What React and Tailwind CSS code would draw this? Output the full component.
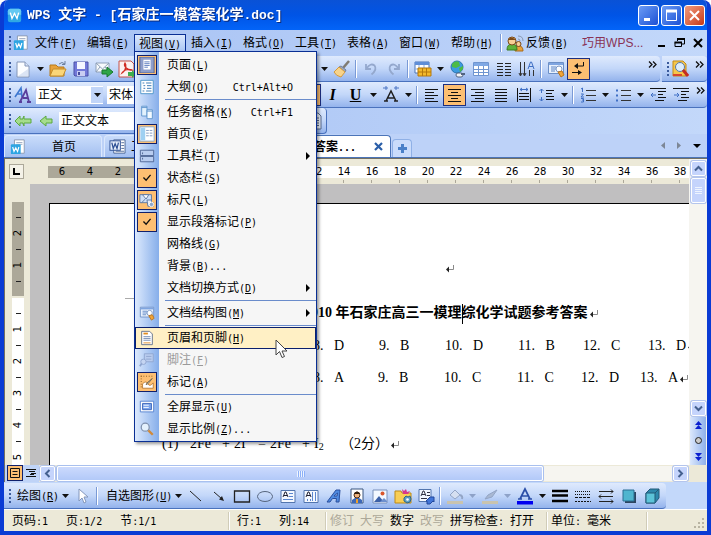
import React from "react";
import clsx from "clsx";

// Chinese text stays at 12px, ASCII runs are set in a 6px wide mono face. "&" marks the access key.
const Mix = ({ text, className }) => (
  <span className={clsx("whitespace-pre", className)}>
    {text.split(/([\x20-\x7e]+)/).map((part, i) =>
      i % 2 ? (
        <span key={i} className="font-['DejaVu_Sans_Mono',monospace] text-[10px]">
          {part.split(/&(.)/).map((c, j) => (j % 2 ? <u key={j}>{c}</u> : c))}
        </span>
      ) : (
        part
      )
    )}
  </span>
);

const Svg = ({ children, size = 18 }) => (
  <svg width={size} height={size} viewBox="0 0 18 18" fill="none" className="shrink-0" aria-hidden="true">
    {children}
  </svg>
);

const icons = {
  wps: (
    <>
      <rect x="1" y="1" width="16" height="16" rx="3" fill="#2fa8e4" />
      <path d="M1 4a3 3 0 0 1 3-3h10a3 3 0 0 1 3 3v4H1z" fill="#63c8f2" />
      <path d="M4 5.500l2 7 3-6 3 6 2-7" stroke="#fff" strokeWidth="1.600" />
    </>
  ),
  wpsDoc: (
    <>
      <path d="M5 1h11v15H5z" fill="#fff" stroke="#8a96ae" />
      <path d="M7 4h7M7 6h7" stroke="#9aa6bd" />
      <rect x="1" y="6" width="11" height="11" rx="1" fill="#2ea5e2" />
      <path d="M3 9l1.500 5L6.500 10l2 4L10 9" stroke="#fff" strokeWidth="1.300" />
    </>
  ),
  wordDoc: (
    <>
      <path d="M5 2h12v14H5z" fill="#fff" stroke="#4d6796" />
      <path d="M13 5h3M13 8h3M13 11h3M7 14h9" stroke="#4d6796" />
      <rect x="1" y="3" width="11" height="10" fill="#e6edfb" stroke="#2d4f94" />
      <path d="M3 5l1.500 6L6.500 6l2 5L10 5" stroke="#2d4f94" strokeWidth="1.300" />
    </>
  ),
  page: (
    <>
      <path d="M3 2h8l4 4v11H3z" fill="#fcfdff" stroke="#8496b8" />
      <path d="M11 2v4h4" fill="#dbe5f8" stroke="#8496b8" />
      <path d="M4 16h10V9z" fill="#dbe4f4" />
    </>
  ),
  open: (
    <>
      <path d="M1 5h6l2 2h6v9H1z" fill="#e8a23a" stroke="#b67b1c" />
      <path d="M4 9h13l-3 7H1z" fill="#fbd678" stroke="#c48d2b" />
      <path d="M10 4q3-3 6 0M16 1v3.500h-3" stroke="#6b7f9e" />
    </>
  ),
  save: (
    <>
      <path d="M2 2h14v14H3l-1-1z" fill="#7279d8" stroke="#4b51a6" />
      <path d="M5 2h8v7H5z" fill="#f4f6ff" />
      <path d="M5 11h8v5H5z" fill="#c9cdf2" />
      <path d="M6 12h2v3H6z" fill="#444a9c" />
    </>
  ),
  mail: (
    <>
      <path d="M1 3h13v9H1z" fill="#f7fafc" stroke="#8fa0b8" />
      <path d="M1 3l6.500 6L14 3M1 12l4-5M14 12l-4-5" stroke="#8fa0b8" />
      <path d="M7 10h5V7l6 5-6 5v-3H7z" fill="#2fa548" stroke="#16792d" />
    </>
  ),
  pdf: (
    <>
      <path d="M1 1h12l3 3v13H1z" fill="#fbf2f0" stroke="#c65249" />
      <path d="M4 13c5-3 4-9 3-10-2 3 3 8 7 7-5-2-9 1-10 3z" stroke="#d02c22" strokeWidth="1.300" />
      <path d="M10 12h4v-2l4 4-4 4v-2h-4z" fill="#3fae4d" />
    </>
  ),
  brush: (
    <>
      <path d="M16 1l-6 7" stroke="#7f7b72" strokeWidth="2.500" />
      <path d="M8 6l5 4-1 2-6-5z" fill="#9aa8c2" stroke="#76829b" />
      <path d="M6 7l6 5-4 5q-5-1-7-5z" fill="#f7d38a" stroke="#d39a3c" />
    </>
  ),
  undo: <path d="M4 4v5h5M4.500 8.500q4-6 8-3 3 4-3 9" stroke="#94a8cd" strokeWidth="1.800" />,
  redo: <path d="M14 4v5H9M13.500 8.500q-4-6-8-3-3 4 3 9" stroke="#94a8cd" strokeWidth="1.800" />,
  tableEdit: (
    <>
      <path d="M1 2h14v11H1z" fill="#fff" stroke="#4b74b8" />
      <path d="M1 2h14v3H1z" fill="#5f8ed8" />
      <path d="M5 5v8M10 5v8M1 9h14" stroke="#8aa9da" />
      <path d="M4 8h13v8H4z" fill="#f3b92b" stroke="#b5790d" />
      <path d="M4 12h13M8.500 8v8M12.500 8v8" stroke="#b5790d" />
    </>
  ),
  globe: (
    <>
      <circle cx="8" cy="7" r="6" fill="#3c9be0" stroke="#2a74b0" />
      <path d="M3 4q3-4 7-2l1 4-4 2-4-1zM10 8l4-2v3l-3 3z" fill="#4dbb46" />
      <path d="M7 15q0-2 2-2h3q2 0 2 2t-2 2H9q-2 0-2-2z" fill="#f3f5f8" stroke="#536480" />
      <path d="M12 14h4" stroke="#536480" strokeWidth="2" />
    </>
  ),
  grid: (
    <>
      <path d="M1.500 2.500h15v13h-15z" fill="#fff" stroke="#6f95d0" />
      <path d="M2 3h14v3H2z" fill="#7fa8e4" />
      <path d="M2 9.500h14M2 12.500h14M6.500 6v9M11.500 6v9" stroke="#6f95d0" />
    </>
  ),
  columns: <path d="M2 3.500h6M2 6.500h6M2 9.500h6M2 12.500h6M2 15.500h6M10 3.500h6M10 6.500h6M10 9.500h6M10 12.500h6M10 15.500h6" stroke="#222" />,
  textDir: (
    <>
      <path d="M2.500 2v13M6.500 2v13M11.500 10v6M15.500 10v6" stroke="#333" />
      <path d="M1 13l1.500 3L4 13M5 13l1.500 3L8 13" stroke="#333" />
      <path d="M10 9l2.500-7h1L16 9M11 6.500h4" stroke="#3f6fc4" />
    </>
  ),
  docMap: (
    <>
      <path d="M1.500 2.500h15v11h-15z" fill="#e9f1fd" stroke="#6c8fc6" />
      <path d="M2 3h14v2H2z" fill="#7fa5e0" />
      <path d="M4 7h5M4 9h5M4 11h4" stroke="#5e86c4" />
      <circle cx="12" cy="9" r="3" fill="#fff" stroke="#7b98c6" />
      <path d="M11 12l4-1 2 4-3 2z" fill="#f0a53a" stroke="#bb731a" />
    </>
  ),
  marks: (
    <>
      <path d="M13.500 2v4H6M2 12.500h8" stroke="#111" />
      <path d="M8 3L4 6l4 3zM8 10l4 2.500L8 15z" fill="#111" />
    </>
  ),
  find: (
    <>
      <path d="M2 1h10l3 3v12H2z" fill="#f6c64a" stroke="#c28b18" />
      <circle cx="9" cy="7" r="4.500" fill="#dcecfb" stroke="#5778a8" />
      <path d="M12 10l5 6" stroke="#c42d22" strokeWidth="3" />
      <path d="M2 15h9" stroke="#d8462e" strokeWidth="2" />
    </>
  ),
  people: (
    <>
      <path d="M9 17q0-5 4-5t4 5z" fill="#e9a13c" stroke="#a96a18" />
      <circle cx="12.500" cy="10" r="2.500" fill="#f8cf96" stroke="#7c4a19" />
      <path d="M1 16q0-6 5-6t5 6z" fill="#5fb33b" stroke="#3b7d20" />
      <circle cx="6" cy="7" r="4" fill="#f8cf96" stroke="#7c4a19" />
      <path d="M2 6q3-5 8 0z" fill="#7c4a19" />
      <path d="M12 5q2 0 2 2M12 2q5 0 5 5" stroke="#8696b0" />
    </>
  ),
  styleA: (
    <>
      <path d="M1 11L7 2l1 9M3 8h5" stroke="#3e78cf" strokeWidth="1.600" />
      <path d="M6 16l6-12 3 12M9 12h5M5 16h3M13 16h4" stroke="#5a3f9c" strokeWidth="1.800" />
    </>
  ),
  charA: (
    <>
      <path d="M4 15L9 5l5 10M6 12h6M2 15h4M12 15h4" stroke="#222" strokeWidth="1.500" />
      <path d="M1 2h5M12 2h5M4 0v4M14 0v4" stroke="#4a74c4" />
    </>
  ),
  left: <path d="M2 3.500h13M2 6.500h9M2 9.500h13M2 12.500h9M2 15.500h13" stroke="#111" />,
  center: <path d="M2 3.500h13M5 6.500h7M2 9.500h13M5 12.500h7M2 15.500h13" stroke="#111" />,
  right: <path d="M2 3.500h13M6 6.500h9M2 9.500h13M6 12.500h9M2 15.500h13" stroke="#111" />,
  justify: <path d="M3 3.500h12M3 6.500h12M3 9.500h12M3 12.500h12M3 15.500h12" stroke="#111" />,
  distribute: (
    <>
      <path d="M2.500 2v14M15.500 2v14M4 7.500h10M4 10.500h10M4 13.500h10" stroke="#111" />
      <path d="M5 3.500h8M7 2L5 3.500 7 5M11 2l2 1.500L11 5" stroke="#3f6fc4" />
    </>
  ),
  spacing: (
    <>
      <path d="M8 4.500h8M8 7.500h6M8 10.500h8M8 13.500h8" stroke="#111" />
      <path d="M3.500 3v4M3.500 11v4M1.500 5l2-2 2 2M1.500 13l2 2 2-2" stroke="#3f6fc4" />
    </>
  ),
  numbers: (
    <>
      <path d="M7 4.500h10M7 9.500h10M7 14.500h10" stroke="#333" />
      <path d="M3.500 2v4M2 3l1.500-1M2 8h2.500L2 11h3M2 12.500h2.500v3.500H2M3 14h1.500" stroke="#3f6fc4" />
    </>
  ),
  bullets: (
    <>
      <path d="M7 4.500h10M7 9.500h10M7 14.500h10" stroke="#333" />
      <path d="M2 3.500h2v2H2zM2 8.500h2v2H2zM2 13.500h2v2H2z" fill="#3f6fc4" />
    </>
  ),
  outdent: (
    <>
      <path d="M1 2.500h16M9 5.500h8M9 8.500h5M9 11.500h8M6 14.500h9" stroke="#111" />
      <path d="M7 9H2M4 7L2 9l2 2" stroke="#3f6fc4" />
    </>
  ),
  indent: (
    <>
      <path d="M1 2.500h16M9 5.500h8M9 8.500h5M9 11.500h8M6 14.500h9" stroke="#111" />
      <path d="M2 9h5M5 7l2 2-2 2" stroke="#3f6fc4" />
    </>
  ),
  back2: (
    <path d="M1 9l5-5v3h3l0-1 1-2v3h7v4h-7v3l-1-2v-1H6v3z" fill="#a5dd8c" stroke="#5aa83f" />
  ),
  back1: <path d="M3 9l6-5v3h6v4H9v3z" fill="#a5dd8c" stroke="#5aa83f" />,
  docLines: (
    <>
      <path d="M3 1h9l3 3v13H3z" fill="#e9f1fd" stroke="#56688c" />
      <path d="M5 6h8M5 8.500h8M5 11h8M5 13.500h8" stroke="#56688c" />
    </>
  ),
  // view menu
  viewPage: (
    <>
      <path d="M1 0h16v18H1z" fill="#8e9ecb" stroke="#4f5c8a" />
      <path d="M5 3h8v11H5z" fill="#fff" />
      <path d="M6 5.500h6M6 7.500h6M6 9.500h6M6 11.500h4" stroke="#5577bb" />
    </>
  ),
  outline: (
    <>
      <path d="M2 1.500h14v15H2z" fill="#fff" stroke="#4790c8" />
      <path d="M4 4.500h2M8 4.500h6M5 7.500h2M9 7.500h5M5 10.500h2M9 10.500h5M4 13.500h2M8 13.500h6" stroke="#2a6fae" />
    </>
  ),
  pane: (
    <>
      <path d="M3 2.500h6v11H3z" fill="#e2f2fd" stroke="#5b93cc" />
      <path d="M9 6.500h6v10H9z" fill="#f3faff" stroke="#5b93cc" />
      <path d="M3 4h6M9 8h6" stroke="#5b93cc" />
    </>
  ),
  home: (
    <>
      <path d="M1 1h16v16H1z" fill="#fff" stroke="#7fa9d8" />
      <path d="M2 2h5v14H2z" fill="#9fd0f2" />
      <path d="M8 5h3M12 5h3M8 8h3M12 8h3M8 11h3M12 11h3" stroke="#7b95bd" />
    </>
  ),
  bars: (
    <>
      <path d="M1.500 2.500h15v6h-15zM1.500 9.500h15v6h-15z" fill="#b9cdf0" stroke="#48608f" />
      <path d="M4 5v2M4 11v2" stroke="#48608f" />
    </>
  ),
  check: <path d="M5 8.500l3 3 5-6" stroke="#111" strokeWidth="1.500" />,
  ruler: (
    <>
      <path d="M1 3h13v9H1z" fill="#cfdff5" stroke="#58739f" />
      <path d="M4 3l4 5 3-5zM3 12l4-4" fill="#fff" stroke="#58739f" />
      <path d="M9 9h5v3h2v4h-6z" fill="#e9eef6" stroke="#58739f" />
      <circle cx="14" cy="14" r="2.500" fill="#8fa6c9" stroke="#fff" />
    </>
  ),
  headerFooter: (
    <>
      <path d="M3 1.500h9l3 3v12H3z" fill="#fff" stroke="#5d6b85" />
      <path d="M5 4h5" stroke="#e08b1d" strokeWidth="2" />
      <path d="M5 7.500h8M5 9.500h8M5 11.500h8" stroke="#6d86b0" />
      <path d="M5 14.500h8" stroke="#e08b1d" />
    </>
  ),
  footnote: (
    <>
      <path d="M6 2h10v9H6z" fill="#b8cbee" stroke="#8fa5cf" />
      <path d="M8 5h6M8 8h6" stroke="#8fa5cf" />
      <circle cx="5" cy="11" r="3" fill="#c5d5f2" stroke="#8fa5cf" />
      <path d="M3 13l-2 3" stroke="#8fa5cf" strokeWidth="2" />
    </>
  ),
  markup: (
    <>
      <path d="M2 2.500h14M2.500 2v13" stroke="#7a4d18" strokeDasharray="1 2" />
      <path d="M4 11q4-4 6 0t6-1v6H4z" fill="#fff" stroke="#b97b35" />
      <path d="M15 5l-5 6-2 1 1-2z" fill="#e4e0d4" stroke="#72634a" />
    </>
  ),
  screen: (
    <>
      <path d="M1.500 2.500h15v12h-15z" fill="#fff" stroke="#4f7dcf" />
      <path d="M4 5h10v7H4z" fill="#7ba5ec" stroke="#3662b8" />
      <path d="M5 7h6M5 9.500h6" stroke="#fff" />
    </>
  ),
  zoom: (
    <>
      <circle cx="7" cy="7" r="4.500" fill="#e4f1fd" stroke="#7f91ae" strokeWidth="1.400" />
      <path d="M10.500 10.500l5 5" stroke="#d08a3b" strokeWidth="2.600" />
    </>
  ),
  // drawing bar
  pointer: <path d="M5 2v12l3-3 2 5 2-1-2-5h4z" fill="#fff" stroke="#8396bb" />,
  line: <path d="M3 4l11 10" stroke="#222" />,
  arrow: (
    <>
      <path d="M4 5l8 7" stroke="#222" />
      <path d="M14 14l-5-1.500 3-3.500z" fill="#222" />
    </>
  ),
  rect: <path d="M1.500 4h15v11h-15z" stroke="#222" strokeWidth="1.300" />,
  ellipse: <ellipse cx="9" cy="9.500" rx="7.500" ry="5" stroke="#56657e" />,
  textBox: (
    <>
      <path d="M2 3.500h14v12H2z" fill="#f4f8ff" stroke="#5275ae" />
      <path d="M4 10l2-5h1l2 5M5 8.500h3" stroke="#223" />
      <path d="M10 6.500h4M10 9.500h4M4 12.500h10" stroke="#5a86d0" />
    </>
  ),
  vTextBox: (
    <>
      <path d="M2 3.500h14v12H2z" fill="#f4f8ff" stroke="#5275ae" />
      <path d="M4 10l2-5h1l2 5M5 8.500h3" stroke="#223" />
      <path d="M10.500 5v9M13.500 5v9M5.500 12v2M8.500 12v2" stroke="#5a86d0" />
    </>
  ),
  wordArt: (
    <>
      <path d="M2 15L11 3h4l-1 12h-3l.5-3.500H7.500L5 15zM9 9h3l.5-3z" fill="#4f8ae0" stroke="#2a4f9e" />
    </>
  ),
  clipArt: (
    <>
      <path d="M3 2h12v14H3z" fill="#fff" stroke="#38547f" />
      <path d="M4 13q5-5 10 0v3H4z" fill="#3d68b8" />
      <circle cx="9" cy="8" r="3" fill="#f0b37d" stroke="#4b2b12" />
      <path d="M6 7q3-5 6 0z" fill="#33200f" />
      <path d="M8 12h2v4H8z" fill="#f0a028" />
    </>
  ),
  picture: (
    <>
      <path d="M2 3h14v13H2z" fill="#f3f8ff" stroke="#7b91bb" />
      <path d="M3 15l5-6 5 6z" fill="#3b60a8" />
      <path d="M9 15l4-4 3 3v1z" fill="#6d90cf" />
      <circle cx="11.500" cy="6.500" r="2" fill="#d9562b" />
    </>
  ),
  gallery: (
    <>
      <path d="M1 4h6l1 2h9v10H1z" fill="#f8ce56" stroke="#bd8a16" />
      <path d="M8 2l2 2 2-2 1 3 3-1-2 3H9z" fill="#d8388a" />
      <path d="M12 9l2 1 2-1 1 3-1 3-3 1-3-2v-3z" fill="#5fa0c4" stroke="#2c6688" />
      <circle cx="13.500" cy="12.500" r="1.300" fill="#fff" />
    </>
  ),
  abcBox: (
    <>
      <path d="M2 2.500h12v12H2z" fill="#f4f8ff" stroke="#5275ae" />
      <path d="M4 9l2-5h1l2 5M5 7.500h3M10 5.500h3M10 8.500h3M4 11.500h6" stroke="#334" />
      <path d="M10 17v-3h-1l4-4h4v5l-1-1-3 3z" fill="#4175d8" stroke="#23489c" />
    </>
  ),
  fill: (
    <>
      <path d="M4 8l5-5 5 5-5 4z" fill="#d5dff1" stroke="#93a5c6" />
      <path d="M14 8q3 1 2 4" stroke="#93a5c6" strokeWidth="2" />
      <path d="M1 14h16v3H1z" fill="#c9c3ae" />
    </>
  ),
  lineColor: (
    <>
      <path d="M16 3l-5 7-7 2 3-4z" fill="#a9b8d2" stroke="#93a5c6" />
      <path d="M1 14h16v3H1z" fill="#c9c3ae" />
    </>
  ),
  fontColor: (
    <>
      <path d="M4 12L9 2l5 10M6 9h6M2 12h4M12 12h4" stroke="#2b4fa8" strokeWidth="1.700" />
      <path d="M1 14h16v3.500H1z" fill="#0000f0" />
    </>
  ),
  weights: <path d="M1 4h16M1 8.500h16M1 14h16" stroke="#000" strokeWidth="2.500" />,
  dashes: (
    <>
      <path d="M1 4.500h16M1 7.500h16" stroke="#111" strokeDasharray="1 1" />
      <path d="M1 10.500h16" stroke="#111" strokeDasharray="3 1" />
      <path d="M1 14.500h16" stroke="#111" strokeDasharray="2 1" />
    </>
  ),
  arrows: <path d="M2 4.500h14M14 2.500l2 2-2 2M2 9.500h14M4 7.500l-2 2 2 2M2 14.500h14M14 12.500l2 2-2 2" stroke="#222" />,
  shadow: (
    <>
      <path d="M5 5h11v11H5z" fill="#2d4560" />
      <path d="M3 3h11v11H3z" fill="#4fb5cf" stroke="#2b6f93" />
    </>
  ),
  cube: (
    <>
      <path d="M3 6l4-4h9v9l-4 5H3z" fill="#2d87ab" stroke="#225a78" />
      <path d="M3 6h9v10H3z" fill="#5cc3d8" stroke="#225a78" />
      <path d="M12 6l4-4" stroke="#225a78" />
    </>
  ),
};

const Tool = ({ name, label, on }) => (
  <button
    aria-label={label}
    className={clsx(
      "flex h-[22px] w-[23px] shrink-0 items-center justify-center",
      on && "border border-[#1c2f80] bg-[#fdbf72]"
    )}
  >
    <Svg>{icons[name]}</Svg>
  </button>
);

const Drop = ({ dim }) => (
  <button aria-label="更多选项" className="flex h-[22px] w-3 shrink-0 items-center justify-center">
    <svg width="7" height="4" aria-hidden="true">
      <path d="M0 0h7L3.500 4z" fill={dim ? "#8ea2c8" : "#111"} />
    </svg>
  </button>
);

const Sep = () => <div className="mx-[2px] h-[18px] w-[2px] shrink-0 border-l border-[#7a9ad6] bg-white" />;

const Grip = () => (
  <div className="ml-[5px] flex shrink-0 flex-col gap-[2px]">
    {[0, 1, 2, 3].map((i) => (
      <span key={i} className="h-[2px] w-[2px] bg-[#3a5a9c]" />
    ))}
  </div>
);

const More = () => (
  <button aria-label="工具栏选项" className="mb-2 flex h-4 w-4 shrink-0 items-center justify-center">
    <svg width="9" height="7" fill="none" stroke="#111" strokeWidth="1.300" aria-hidden="true">
      <path d="M1 0.500l3 3-3 3M5 0.500l3 3-3 3" />
    </svg>
  </button>
);

const Bar = ({ className, children }) => (
  <div
    className={clsx(
      "flex h-[26px] items-center overflow-hidden rounded-r-sm border-b border-[#4a72bd] bg-gradient-to-b from-[#dfeafd] via-[#c3d7f9] to-[#94b3ec]",
      className
    )}
  >
    {children}
  </div>
);

const Combo = ({ label, value, className }) => (
  <div className={clsx("flex h-[18px] shrink-0 items-center bg-white", className)}>
    <select aria-label={label} className="h-full min-w-0 flex-1 appearance-none bg-white pl-[2px] text-xs">
      <option>{value}</option>
    </select>
    <span className="flex h-4 w-3 items-center justify-center bg-[#c1d5f8]">
      <svg width="7" height="4" aria-hidden="true">
        <path d="M0 0h7L3.500 4z" fill="#111" />
      </svg>
    </span>
  </div>
);

const viewMenu = [
  { text: "页面(&L)", icon: "viewPage", on: true },
  { text: "大纲(&O)", icon: "outline", keys: "Ctrl+Alt+O" },
  null,
  { text: "任务窗格(&K)", icon: "pane", keys: "Ctrl+F1" },
  { text: "首页(&E)", icon: "home", on: true },
  { text: "工具栏(&T)", icon: "bars", sub: true },
  { text: "状态栏(&S)", icon: "check", on: true },
  { text: "标尺(&L)", icon: "ruler", on: true },
  { text: "显示段落标记(&P)", icon: "check", on: true },
  { text: "网格线(&G)" },
  { text: "背景(&B)..." },
  { text: "文档切换方式(&D)", sub: true },
  null,
  { text: "文档结构图(&M)", icon: "docMap", sub: true },
  null,
  { text: "页眉和页脚(&H)", icon: "headerFooter", active: true },
  { text: "脚注(&F)", icon: "footnote", disabled: true },
  { text: "标记(&A)", icon: "markup", on: true },
  null,
  { text: "全屏显示(&U)", icon: "screen" },
  { text: "显示比例(&Z)...", icon: "zoom" },
];

const ViewMenu = () => (
  <div className="absolute left-0 top-[17px] z-20 w-[183px] border border-[#0a2f94] bg-[#f6f6f6] bg-[linear-gradient(to_right,#dce9fd_0,#86aeea_24px,#f6f6f6_24px)] pb-px pt-[2px] shadow-[2px_2px_3px_rgba(0,0,0,0.4)]">
    {viewMenu.map((item, i) =>
      item ? (
        <button
          key={i}
          disabled={item.disabled}
          className={clsx(
            "flex h-[22px] w-full items-center border pl-px text-left",
            item.active ? "border-[#0a1f6c] bg-[#fff0c5]" : "border-transparent",
            item.disabled && "text-[#9a9a9a]"
          )}
        >
          <span
            className={clsx(
              "flex h-5 w-5 shrink-0 items-center justify-center",
              item.on && "border border-[#10206c] bg-[#fdbf72]"
            )}
          >
            {item.icon && <Svg size={16}>{icons[item.icon]}</Svg>}
          </span>
          <Mix text={item.text} className="ml-[10px] flex-1" />
          {item.keys && <Mix text={item.keys} className="mr-[22px]" />}
          {item.sub && (
            <svg width="4" height="8" className="mr-[5px]" aria-hidden="true">
              <path d="M0 0l4 4-4 4z" fill="#000" />
            </svg>
          )}
        </button>
      ) : (
        <div key={i} className="ml-[30px] flex h-[3px] items-center">
          <div className="h-px w-full bg-[#6a8ccb]" />
        </div>
      )
    )}
    {/* mouse pointer over the highlighted item */}
    <svg width="13" height="20" viewBox="0 0 13 20" className="absolute left-[140px] top-[287px]" aria-hidden="true">
      <path d="M1 1v15l3.500-3.500L7 18.500l2.500-1L7 12h5z" fill="#fff" stroke="#444" />
    </svg>
  </div>
);

const menusBefore = ["文件(&F)", "编辑(&E)"];
const menusAfter = ["插入(&I)", "格式(&O)", "工具(&T)", "表格(&A)", "窗口(&W)", "帮助(&H)"];

const MenuButton = ({ text }) => (
  <button className="h-[18px] w-[52px] shrink-0">
    <Mix text={text} />
  </button>
);

const TitleButton = ({ label, close, children }) => (
  <button
    aria-label={label}
    className={clsx(
      "flex h-[21px] w-[21px] items-center justify-center rounded-[3px] border border-white",
      close ? "bg-gradient-to-br from-[#f09a7c] to-[#c8350f]" : "bg-gradient-to-br from-[#6c9bf5] to-[#1c4fd4]"
    )}
  >
    <svg width="15" height="15" fill="none" stroke="#fff" aria-hidden="true">
      {children}
    </svg>
  </button>
);

const Return = () => (
  <svg width="9" height="9" className="ml-px inline-block" fill="none" aria-hidden="true">
    <path d="M8.500 1v4.500H4" stroke="#8a8a8a" />
    <path d="M1 5.500l3-3v6z" fill="#222" />
  </svg>
);

const ScrollButton = ({ label, d }) => (
  <button
    aria-label={label}
    className="flex h-[15px] w-[15px] shrink-0 items-center justify-center rounded-[2px] border border-white bg-[#c5d4fc] shadow-[0_0_0_1px_#b4c5ec]"
  >
    <svg width="9" height="9" fill="none" stroke="#44608f" strokeWidth="2" aria-hidden="true">
      <path d={d} />
    </svg>
  </button>
);

const rulerMarks = ["14", "16", "18", "20", "22", "24", "26", "28", "30", "32", "34", "36", "38"];

const answers = [
  [
    { n: "8", v: "D", w: "w-[66px]" },
    { n: "9", v: "B", w: "w-[66px]" },
    { n: "10", v: "D", w: "w-[73px]" },
    { n: "11", v: "B", w: "w-[65px]" },
    { n: "12", v: "C", w: "w-[65px]" },
    { n: "13", v: "D", w: "w-16" },
  ],
  [
    { n: "8", v: "A", w: "w-[65px]" },
    { n: "9", v: "B", w: "w-[66px]" },
    { n: "10", v: "C", w: "w-[73px]" },
    { n: "11", v: "C", w: "w-16" },
    { n: "12", v: "D", w: "w-[59px]" },
    { n: "13", v: "A", w: "w-16" },
  ],
];

const VTick = () => (
  <span className="flex h-4 shrink-0 items-center">
    <i className="h-px w-[5px] bg-[#222]" />
  </span>
);

const VNum = ({ n }) => (
  <span className="flex h-4 shrink-0 items-center">
    <span className="-rotate-90 text-[10px] leading-none">{n}</span>
  </span>
);

const Editor = () => (
  <div className="flex min-h-0 flex-1 border-l border-t border-[#716f64] bg-[#ece9d8]">
    {/* vertical ruler */}
    <div className="flex w-[25px] shrink-0 flex-col overflow-hidden pl-1 font-['DejaVu_Sans',sans-serif]">
      <button
        aria-label="制表符"
        className="mt-[5px] flex h-[15px] w-[15px] shrink-0 items-center justify-center border border-[#aca899] bg-[#f4f2e8]"
      >
        <svg width="7" height="7" aria-hidden="true">
          <path d="M1 0v6h6" fill="none" stroke="#000" strokeWidth="2" />
        </svg>
      </button>
      <div className="ml-[3px] mt-[23px] flex h-[94px] w-3 shrink-0 flex-col items-center justify-center bg-[#aca899]">
        <VTick />
        <VNum n="2" />
        <VTick />
        <VNum n="1" />
        <VTick />
      </div>
      <div className="ml-[3px] mt-[2px] flex min-h-0 w-3 flex-1 flex-col items-center overflow-hidden bg-white pt-[7px]">
        {["1", "2", "3", "4", "5"].map((n) => (
          <React.Fragment key={n}>
            <VTick />
            <VNum n={n} />
          </React.Fragment>
        ))}
      </div>
    </div>

    <div className="flex min-w-0 flex-1 flex-col">
      {/* horizontal ruler */}
      <div className="h-[25px] shrink-0 overflow-hidden pl-[18px] pt-[7px] font-['DejaVu_Sans',sans-serif] text-[10px] leading-3">
        <div className="flex h-3 bg-white text-center">
          <div className="flex w-[100px] shrink-0 bg-[#aca899]">
            <span className="w-7">6</span>
            <span className="w-7">4</span>
            <span className="w-7">2</span>
          </div>
          <div className="w-[154px] shrink-0" />
          <span className="w-7 shrink-0">12</span>
          {rulerMarks.map((n) => (
            <span key={n} className="w-7 shrink-0">
              {n}
            </span>
          ))}
        </div>
        <div className="ml-[281px] mt-[2px] flex">
          {rulerMarks.map((n) => (
            <span key={n} className="flex w-7 shrink-0 justify-center">
              <i className="h-[3px] w-px bg-[#aca899]" />
            </span>
          ))}
        </div>
      </div>

      <div className="flex min-h-0 flex-1 flex-col bg-[#c0bfc0] pl-[19px] pt-[19px]">
        <div className="min-h-0 flex-1 overflow-hidden whitespace-nowrap border-l border-t border-black bg-white font-['Liberation_Serif','Noto_Sans_CJK_SC',serif] text-sm leading-5">
          <div className="h-[94px] pl-[394px] pt-[54px]">
            <Return />
          </div>
          <div className="ml-[75px] h-[5px] w-3 border-t border-[#aaa]" />
          <h1 className="pl-[254px] font-bold">
            2010 年石家庄高三一模理
            <span className="-mr-px inline-block h-5 w-px bg-black align-middle" />
            综化学试题参考答案
            <Return />
          </h1>
          <div className="pt-[6px]">
            {answers.map((row, i) => (
              <p key={i} className="flex h-8 items-center overflow-hidden pl-[263px]">
                {row.map((a) => (
                  <span key={a.n} className={clsx("shrink-0", a.w)}>
                    {a.n}
                    <span className="inline-block w-[14px]">.</span>
                    {a.v}
                    {a.n === "13" && <Return />}
                  </span>
                ))}
              </p>
            ))}
          </div>
          <p className="mt-10 flex h-5 pl-28">
            <span className="w-7">(1)</span>
            <span className="w-8">2Fe</span>
            <span className="w-3">+</span>
            <span className="w-6">2I</span>
            <span className="w-3">=</span>
            <span className="w-8">2Fe</span>
            <span className="w-3">+</span>
            <span className="w-[26px]">
              I<sub className="text-[10px]">2</sub>
            </span>
            <span>
              （2分）
              <Return />
            </span>
          </p>
          <p className="mt-2 h-5 pl-[217px]">CO2 CO2ET</p>
        </div>
      </div>
    </div>

    {/* vertical scroll bar */}
    <div className="flex w-[18px] shrink-0 flex-col items-center bg-[#f6f5f0]">
      <div className="pt-[2px]">
        <ScrollButton label="向上滚动" d="M1 6.500l3.500-3.500L8 6.500" />
      </div>
      <div className="mt-[2px] flex h-[25px] w-[15px] flex-col items-center justify-center gap-px rounded-[2px] border border-white bg-[#c5d4fc] shadow-[0_0_0_1px_#b4c5ec]">
        {[0, 1, 2, 3].map((i) => (
          <span key={i} className="h-px w-[7px] bg-[#eef4fe]" />
        ))}
      </div>
      <div className="flex-1" />
      <ScrollButton label="向下滚动" d="M1 2.500L4.500 6 8 2.500" />
      <div className="mt-px flex h-12 w-4 flex-col items-center justify-around bg-gradient-to-r from-[#dce8fc] to-[#8fb0ea]">
        <button aria-label="前一页">
          <svg width="7" height="8" fill="#0a1fd0" className="block" aria-hidden="true">
            <path d="M0 4l3.500-4L7 4zM0 8l3.500-4L7 8z" />
          </svg>
        </button>
        <button aria-label="选择浏览对象" className="h-[7px] w-[7px] rounded-full border border-[#222] bg-[#ccc]" />
        <button aria-label="下一页">
          <svg width="7" height="8" fill="#0a1fd0" className="block" aria-hidden="true">
            <path d="M0 0h7L3.500 4zM0 4h7L3.500 8z" />
          </svg>
        </button>
      </div>
    </div>
  </div>
);

const Divider = () => <div className="h-[18px] w-[2px] shrink-0 border-l border-[#d0ccb8] bg-white" />;

const App = () => (
  <div className="flex h-screen flex-col overflow-hidden rounded-t-lg border-x-4 border-b-4 border-[#0a3bd4] bg-[#bdd2f8] font-['Liberation_Sans','Noto_Sans_CJK_SC',sans-serif] text-xs text-black">
    {/* title bar */}
    <header className="-mx-1 flex h-[30px] shrink-0 items-center bg-gradient-to-b from-[#0a52d6] via-[#0054e6] to-[#0364f8] pl-[7px] pr-[6px] text-white">
      <Svg size={15}>{icons.wps}</Svg>
      <h1 className="ml-[5px] flex-1 whitespace-pre text-sm font-bold drop-shadow-[1px_1px_0_#0a2c80]">
        <span className="font-['Liberation_Mono',monospace] text-[13px]">WPS </span>文字
        <span className="font-['Liberation_Mono',monospace] text-[13px]"> - [</span>石家庄一模答案化学
        <span className="font-['Liberation_Mono',monospace] text-[13px]">.doc]</span>
      </h1>
      <div className="flex gap-[2px]">
        <TitleButton label="最小化">
          <path d="M3 11.500h6" strokeWidth="3" />
        </TitleButton>
        <TitleButton label="最大化">
          <path d="M2.500 3.500h10v9h-10z" />
          <path d="M2 3h11" strokeWidth="3" />
        </TitleButton>
        <TitleButton label="关闭" close>
          <path d="M3 3l9 9M12 3l-9 9" strokeWidth="2" />
        </TitleButton>
      </div>
    </header>

    {/* menu bar */}
    <nav className="flex h-[26px] shrink-0 items-center bg-gradient-to-r from-[#a5c0f3] to-[#c3d8fa]">
      <Grip />
      <div className="flex w-[19px] shrink-0 pl-[2px]">
        <Svg size={16}>{icons.wpsDoc}</Svg>
      </div>
      {menusBefore.map((m) => (
        <MenuButton key={m} text={m} />
      ))}
      <div className="relative shrink-0">
        <button className="block h-[18px] w-[52px] border border-b-0 border-[#0a2f94] bg-gradient-to-b from-[#dbe8fd] to-[#a9c4f2]">
          <Mix text="视图(&V)" />
        </button>
        <ViewMenu />
      </div>
      {menusAfter.map((m) => (
        <MenuButton key={m} text={m} />
      ))}
      <Sep />
      <button className="ml-[2px] flex shrink-0 items-center gap-[2px]">
        <Svg>{icons.people}</Svg>
        <Mix text="反馈(&B)" />
      </button>
      <a href="#tips" className="ml-[14px] shrink-0 whitespace-nowrap text-[#8a3355]">
        巧用WPS...
      </a>
      <div className="ml-auto flex shrink-0 items-center gap-2 pr-1">
        <button aria-label="最小化文档">
          <svg width="10" height="12" className="block" aria-hidden="true">
            <path d="M2 8h7v2H2z" />
          </svg>
        </button>
        <button aria-label="还原文档">
          <svg width="11" height="12" fill="none" stroke="#000" className="block" aria-hidden="true">
            <path d="M3.500 4V2h7v5H8M1 5.500h6.500v4H1z" />
            <path d="M3 2h8M0.500 5.500H8" strokeWidth="2" />
          </svg>
        </button>
        <button aria-label="关闭文档">
          <svg width="10" height="12" stroke="#000" strokeWidth="2" className="block" aria-hidden="true">
            <path d="M1 2l8 8M9 2l-8 8" />
          </svg>
        </button>
      </div>
    </nav>

    {/* standard toolbar */}
    <div className="flex shrink-0 gap-[2px]">
      <Bar className="flex-1">
        <Grip />
        <Tool name="page" label="新建" />
        <Drop />
        <Tool name="open" label="打开" />
        <Tool name="save" label="保存" />
        <Tool name="mail" label="邮件" />
        <Tool name="pdf" label="PDF" />
        <div className="w-[180px] shrink-0" />
        <Drop />
        <Tool name="brush" label="格式刷" />
        <Sep />
        <Tool name="undo" label="撤消" />
        <Tool name="redo" label="恢复" />
        <Sep />
        <Tool name="tableEdit" label="表格" />
        <Drop />
        <Tool name="globe" label="超链接" />
        <Tool name="grid" label="插入表格" />
        <Tool name="columns" label="分栏" />
        <Tool name="textDir" label="文字方向" />
        <Sep />
        <Tool name="docMap" label="文档结构图" />
        <Tool name="marks" label="显示段落标记" on />
        <div className="flex-1" />
        <More />
      </Bar>
      <Bar className="w-[45px] shrink-0">
        <Grip />
        <div className="flex w-[22px] pl-[2px]">
          <Svg>{icons.find}</Svg>
        </div>
        <More />
      </Bar>
    </div>

    {/* formatting toolbar */}
    <Bar className="shrink-0">
      <Grip />
      <Tool name="styleA" label="样式和格式" />
      <Combo label="样式" value="正文" className="ml-[2px] w-[67px]" />
      <Combo label="字体" value="宋体" className="ml-1 w-24" />
      <Combo label="字号" value="小四" className="ml-1 w-16" />
      <div className="w-7 shrink-0" />
      <button className="h-[22px] w-[22px] shrink-0 border border-[#1c2f80] bg-[#fdbf72] font-bold">B</button>
      <button className="w-[23px] shrink-0 font-['Liberation_Serif',serif] text-base font-bold italic">I</button>
      <button className="w-[23px] shrink-0 font-['Liberation_Serif',serif] text-base font-bold underline">U</button>
      <Drop />
      <Tool name="charA" label="字符缩放" />
      <Drop />
      <Sep />
      <Tool name="left" label="左对齐" />
      <Tool name="center" label="居中" on />
      <Tool name="right" label="右对齐" />
      <Tool name="justify" label="两端对齐" />
      <Tool name="distribute" label="分散对齐" />
      <Tool name="spacing" label="行距" />
      <Drop />
      <Sep />
      <Tool name="numbers" label="编号" />
      <Drop />
      <Tool name="bullets" label="项目符号" />
      <Drop />
      <Tool name="outdent" label="减少缩进量" />
      <Tool name="indent" label="增加缩进量" />
      <More />
    </Bar>

    {/* header style toolbar */}
    <div className="flex shrink-0 bg-gradient-to-r from-[#a5c0f3] to-[#c3d8fa]">
      <Bar className="w-[323px] rounded-r border-r">
        <Grip />
        <Tool name="back2" label="全部后退" />
        <Tool name="back1" label="后退" />
        <Combo label="段落样式" value="正文文本" className="ml-[2px] w-[200px]" />
        <div className="flex-1" />
        <Tool name="docLines" label="文档" />
      </Bar>
    </div>

    {/* document tabs */}
    <div className="flex h-6 shrink-0 items-end border-b border-[#4b74b8]">
      <button className="flex h-[22px] w-[98px] shrink-0 items-center rounded-t border border-b-0 border-[#dbe8fd] bg-gradient-to-b from-[#c9dcfb] to-[#a3bff0] pl-[5px]">
        <Svg size={16}>{icons.wpsDoc}</Svg>
        <span className="ml-[26px]">首页</span>
      </button>
      <button className="ml-[2px] flex h-[22px] w-24 shrink-0 items-center rounded-t border border-b-0 border-[#dbe8fd] bg-gradient-to-b from-[#c9dcfb] to-[#a3bff0] pl-1">
        <Svg size={17}>{icons.wordDoc}</Svg>
        <span className="ml-[5px]">工作簿</span>
      </button>
      <button className="flex h-[22px] w-[191px] shrink-0 items-center justify-end rounded-t border border-b-0 border-[#4b74b8] bg-white pr-[7px] font-bold">
        <Mix text="石家庄一模答案..." />
        <svg width="9" height="9" className="ml-[18px]" stroke="#2a5ea8" strokeWidth="2.200" aria-hidden="true">
          <path d="M1 1l7 7M8 1L1 8" />
        </svg>
      </button>
      <button
        aria-label="新建标签"
        className="ml-px flex h-[18px] w-5 shrink-0 items-center justify-center rounded-t border border-b-0 border-[#8fb0e6] bg-[#cadcfb]"
      >
        <svg width="9" height="9" stroke="#4a80c8" strokeWidth="3" aria-hidden="true">
          <path d="M4.500 0v9M0 4.500h9" />
        </svg>
      </button>
      <div className="ml-auto flex items-center gap-3 self-center pr-[6px]">
        <button aria-label="上一个标签">
          <svg width="4" height="7" fill="#7d8796" className="block">
            <path d="M4 0v7L0 3.500z" />
          </svg>
        </button>
        <button aria-label="下一个标签">
          <svg width="4" height="7" fill="#7d8796" className="block">
            <path d="M0 0v7l4-3.500z" />
          </svg>
        </button>
        <button aria-label="标签列表">
          <svg width="8" height="4" className="block">
            <path d="M0 0h8L4 4z" />
          </svg>
        </button>
      </div>
    </div>

    <Editor />

    {/* horizontal scroll bar */}
    <div className="flex h-[17px] shrink-0 items-center border-l border-[#716f64] bg-[#ece9d8]">
      <div className="flex h-full w-[34px] shrink-0 bg-[#bfd3f7] pl-[2px]">
        <button aria-label="页面视图" className="flex h-4 w-4 items-center justify-center border border-[#10206c] bg-[#fdbf72]">
          <svg width="10" height="10" fill="none" stroke="#111" aria-hidden="true">
            <path d="M0.500 0.500h9v9h-9zM2.500 3.500h5M2.500 6.500h5" />
          </svg>
        </button>
        <button aria-label="大纲视图" className="flex h-4 w-4 items-center justify-center">
          <svg width="10" height="10" fill="none" stroke="#111" aria-hidden="true">
            <path d="M0 1.500h10M3 3.500h6M5 5.500h5M0 8.500h10M4 6.500h4" />
          </svg>
        </button>
      </div>
      <div className="flex min-w-0 flex-1 items-center gap-[2px] bg-[#f6f5f0] pl-px">
        <ScrollButton label="向左滚动" d="M6.500 1L3 4.500 6.500 8" />
        <div className="flex h-[15px] w-3/4 items-center justify-center gap-px rounded-[2px] border border-white bg-gradient-to-b from-[#ccdafd] to-[#b2c9f8] shadow-[0_0_0_1px_#a9c0ee]">
          {[0, 1, 2, 3].map((i) => (
            <span key={i} className="h-[6px] w-px bg-[#eef4fe] shadow-[1px_0_0_#8cb0f8]" />
          ))}
        </div>
        <div className="flex-1" />
        <ScrollButton label="向右滚动" d="M2.500 1L6 4.500 2.500 8" />
      </div>
      <div className="w-[19px] shrink-0" />
    </div>

    {/* drawing toolbar */}
    <div className="flex shrink-0 bg-[#c3d8fa] pt-px">
      <Bar className="w-[662px]">
        <Grip />
        <button className="ml-[6px] shrink-0">
          <Mix text="绘图(&R)" />
        </button>
        <Drop />
        <Tool name="pointer" label="选择对象" />
        <Sep />
        <button className="ml-[6px] shrink-0">
          <Mix text="自选图形(&U)" />
        </button>
        <Drop />
        <Tool name="line" label="直线" />
        <Tool name="arrow" label="箭头" />
        <Tool name="rect" label="矩形" />
        <Tool name="ellipse" label="椭圆" />
        <Tool name="textBox" label="文本框" />
        <Tool name="vTextBox" label="竖排文本框" />
        <Tool name="wordArt" label="艺术字" />
        <Tool name="clipArt" label="剪贴画" />
        <Tool name="picture" label="图片" />
        <Tool name="gallery" label="素材库" />
        <Tool name="abcBox" label="文字框" />
        <Sep />
        <Tool name="fill" label="填充颜色" />
        <Drop dim />
        <Tool name="lineColor" label="线条颜色" />
        <Drop dim />
        <Tool name="fontColor" label="字体颜色" />
        <Drop />
        <Tool name="weights" label="线型" />
        <Tool name="dashes" label="虚线线型" />
        <Tool name="arrows" label="箭头样式" />
        <Tool name="shadow" label="阴影" />
        <Tool name="cube" label="三维效果" />
      </Bar>
    </div>

    {/* status bar */}
    <footer className="flex h-[22px] shrink-0 items-center overflow-hidden border-t border-white bg-[#ece9d8]">
      <div className="flex w-56 shrink-0 gap-[18px] pl-2">
        <Mix text="页码:1" />
        <Mix text="页:1/2" />
        <Mix text="节:1/1" />
      </div>
      <Divider />
      <div className="flex w-[95px] shrink-0 gap-[18px] pl-[7px]">
        <Mix text="行:1" />
        <Mix text="列:14" />
      </div>
      <Divider />
      <span className="w-[30px] shrink-0 pl-[3px] text-[#aca899]">修订</span>
      <span className="w-[30px] shrink-0 pl-[3px] text-[#aca899]">大写</span>
      <span className="w-[30px] shrink-0 pl-[3px]">数字</span>
      <span className="w-[30px] shrink-0 pl-[3px] text-[#aca899]">改写</span>
      <Mix text="拼写检查: 打开" className="w-[99px] shrink-0 pl-[3px]" />
      <Divider />
      <Mix text="单位: 毫米" className="w-[98px] shrink-0 pl-[3px]" />
      <Divider />
      <svg width="11" height="11" className="ml-auto mr-[2px] mt-[6px]" fill="#b8b4a2" aria-hidden="true">
        <path d="M8 0h2v2H8zM4 4h2v2H4zM8 4h2v2H8zM0 8h2v2H0zM4 8h2v2H4zM8 8h2v2H8z" />
      </svg>
    </footer>
  </div>
);

export default App;
